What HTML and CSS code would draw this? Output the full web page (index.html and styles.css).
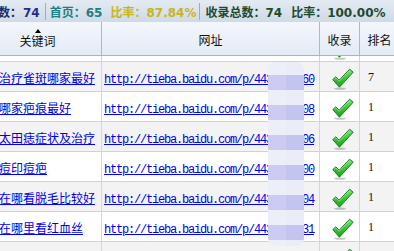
FILE: index.html
```html
<!DOCTYPE html>
<html lang="zh-CN">
<head>
<meta charset="utf-8">
<title>收录统计</title>
<link rel="stylesheet" href="styles.css">
</head>
<body>
<div class="stats">
  <span class="s-total"><span class="lbl">数：</span><span class="num n-blue">74</span></span>
  <span class="sep"></span>
  <span class="s-home">首页：<span class="num">65</span></span>
  <span class="s-ratio">比率：<span class="num">87.84%</span></span>
  <span class="sep sep2"></span>
  <span class="s-inc">收录总数：<span class="num">74</span></span>
  <span class="s-inc s-inc2">比率：<span class="num">100.00%</span></span>
</div>

<table class="grid head">
  <colgroup><col class="c1"><col class="c2"><col class="c3"><col class="c4"></colgroup>
  <thead>
    <tr>
      <th class="kw"><div class="kwhead"><span class="sort"></span><span>关键词</span></div></th>
      <th>网址</th>
      <th>收录</th>
      <th>排名</th>
    </tr>
  </thead>
</table>

<div class="scroll">
  <table class="grid body">
    <colgroup><col class="c1"><col class="c2"><col class="c3"><col class="c4"></colgroup>
    <tbody>
      <tr><td class="kw"></td><td class="url"></td><td class="ok"><svg class="chk" width="22" height="22"><use href="#check"/></svg></td><td class="rank"></td></tr>
      <tr><td class="kw"><a href="#">治疗雀斑哪家最好</a></td><td class="url"><a href="#">http://tieba.baidu.com/p/4430000060</a></td><td class="ok"><svg class="chk" width="22" height="22"><use href="#check"/></svg></td><td class="rank">7</td></tr>
      <tr><td class="kw"><a href="#">哪家疤痕最好</a></td><td class="url"><a href="#">http://tieba.baidu.com/p/4430000008</a></td><td class="ok"><svg class="chk" width="22" height="22"><use href="#check"/></svg></td><td class="rank">1</td></tr>
      <tr><td class="kw"><a href="#">太田痣症状及治疗</a></td><td class="url"><a href="#">http://tieba.baidu.com/p/4430000006</a></td><td class="ok"><svg class="chk" width="22" height="22"><use href="#check"/></svg></td><td class="rank">1</td></tr>
      <tr><td class="kw"><a href="#">痘印痘疤</a></td><td class="url"><a href="#">http://tieba.baidu.com/p/4430000000</a></td><td class="ok"><svg class="chk" width="22" height="22"><use href="#check"/></svg></td><td class="rank">1</td></tr>
      <tr><td class="kw"><a href="#">在哪看脱毛比较好</a></td><td class="url"><a href="#">http://tieba.baidu.com/p/4430000004</a></td><td class="ok"><svg class="chk" width="22" height="22"><use href="#check"/></svg></td><td class="rank">1</td></tr>
      <tr><td class="kw"><a href="#">在哪里看红血丝</a></td><td class="url"><a href="#">http://tieba.baidu.com/p/4430000031</a></td><td class="ok"><svg class="chk" width="22" height="22"><use href="#check"/></svg></td><td class="rank">1</td></tr>
      <tr><td class="kw"></td><td class="url"></td><td class="ok"><svg class="chk" width="22" height="22"><use href="#check"/></svg></td><td class="rank"></td></tr>
    </tbody>
  </table>
  <div class="redact"></div>
</div>

<svg class="defs" width="0" height="0" aria-hidden="true">
  <defs>
    <linearGradient id="chkfill" x1="0" y1="0" x2="0" y2="1">
      <stop offset="0" stop-color="#7ee27a"/>
      <stop offset="0.5" stop-color="#3cc43a"/>
      <stop offset="1" stop-color="#17a01a"/>
    </linearGradient>
    <symbol id="check" viewBox="0 0 22 22">
      <ellipse cx="8" cy="20.6" rx="6" ry="1.2" fill="#000" opacity="0.22"/>
      <path d="M0.8 11.6 L3.8 8.8 L7.2 12.2 L17.6 1.2 L21.2 4.2 L7.4 19.2 Z" fill="url(#chkfill)" stroke="#1e7f20" stroke-width="1" stroke-linejoin="round"/>
      <path d="M2.2 11.4 L3.8 9.9 L7.2 13.3 L17.6 2.5" fill="none" stroke="#b8f3b0" stroke-width="0.8" opacity="0.8"/>
    </symbol>
  </defs>
</svg>
</body>
</html>
```

FILE: styles.css
```css
html, body {
  margin: 0;
  padding: 0;
}
body {
  width: 394px;
  height: 251px;
  overflow: hidden;
  background: #ffffff;
  font-family: "Noto Sans CJK SC", "Noto Sans", sans-serif;
  color: #111;
}

/* top statistics bar */
.stats {
  height: 22px;
  display: flex;
  align-items: center;
  white-space: nowrap;
  font-size: 12px;
  font-weight: bold;
  background: linear-gradient(#e3eaf3, #cfdae7);
  overflow: hidden;
}
.num {
  font-family: "DejaVu Sans", sans-serif;
  font-weight: bold;
  font-size: 12px;
}
.s-total {
  margin-left: -2px;
  color: #1f2b66;
}
.n-blue {
  color: #2a2a8e;
  margin-left: 1px;
}
.sep {
  width: 1px;
  height: 17px;
  background: #9cadc0;
  margin: 0 4px 0 5px;
}
.sep2 {
  margin: 0 5px 0 3px;
}
.s-home {
  color: #1f7f80;
}
.s-ratio {
  color: #c8b51c;
  margin-left: 8px;
}
.s-inc {
  color: #1d4b2a;
}
.s-inc2 {
  margin-left: 9px;
}

/* table grid */
.grid {
  table-layout: fixed;
  border-collapse: separate;
  border-spacing: 0;
  width: 400px;
}
.c1 { width: 102px; }
.c2 { width: 218px; }
.c3 { width: 40px; }
.c4 { width: 40px; }

.head th {
  box-sizing: border-box;
  height: 34px;
  padding: 2px 0 0;
  font-size: 12px;
  font-weight: normal;
  color: #111;
  text-align: center;
  vertical-align: middle;
  background: linear-gradient(#f3f7fc, #e4ebf5);
  border-right: 1px solid #a9b9cf;
  border-bottom: 1px solid #a2b4cb;
}
.head th.kw {
  text-align: left;
  padding-top: 0;
}
.kwhead {
  width: 36px;
  margin-left: 20px;
  display: flex;
  flex-direction: column;
  align-items: center;
  gap: 1px;
  line-height: 14px;
}
.sort {
  width: 0;
  height: 0;
  border-left: 3.5px solid transparent;
  border-right: 3.5px solid transparent;
  border-bottom: 4px solid #000;
}

.scroll {
  position: relative;
  height: 195px;
  overflow: hidden;
}
.scroll .grid {
  margin-top: -24px;
}
.body td {
  box-sizing: border-box;
  height: 30px;
  padding: 2px 0 0;
  font-size: 12px;
  white-space: nowrap;
  overflow: hidden;
  vertical-align: middle;
  border-right: 1px solid #cad8ec;
  border-bottom: 1px solid #c5d4ea;
}
.body tr:nth-child(even) td {
  background: #f3f3f3;
}
.body a {
  color: #0000f0;
  text-decoration: underline;
}
.kw {
  text-indent: -1px;
}
.url {
  padding-left: 2px !important;
}
.url a {
  font-family: "Liberation Mono", "Courier New", monospace;
  font-size: 12px;
  letter-spacing: -1.2px;
}
.body td.ok {
  vertical-align: top;
  padding: 6px 0 0 12px;
}
.chk {
  display: block;
}
.rank {
  padding-left: 8px !important;
  font-family: "Liberation Serif", serif;
  font-size: 13px;
}

/* blurred redaction over part of the URLs */
.redact {
  position: absolute;
  left: 268px;
  top: 6px;
  width: 36px;
  height: 184px;
  border-radius: 8px;
  background:
    linear-gradient(to right, rgba(255,255,255,0.12) 0 50%, rgba(0,0,0,0) 50%),
    repeating-linear-gradient(to bottom, #eaecf8 0 13px, #c4c4f1 13px 28px, #eaecf8 28px 30px);
}

.defs {
  display: block;
  width: 0;
  height: 0;
  overflow: hidden;
}
```
